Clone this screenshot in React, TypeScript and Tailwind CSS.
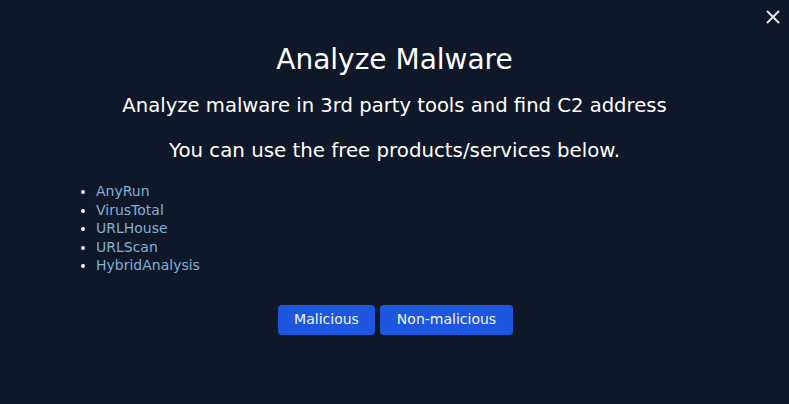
import { X } from "lucide-react"

const tools = ["AnyRun", "VirusTotal", "URLHouse", "URLScan", "HybridAnalysis"]

export default function App() {
  return (
    <div className="relative w-[789px] h-[404px] bg-[#0f1828] text-white font-['DejaVu_Sans',sans-serif]">
      <button className="absolute right-[5px] top-[6px] text-gray-200">
        <X size={22} strokeWidth={2.2} />
      </button>
      <div className="flex flex-col items-center pt-[42px]">
        <h1 className="text-[28px] leading-[36px] font-medium">Analyze Malware</h1>
        <p className="mt-[14px] text-[19.6px] leading-[28px]">Analyze malware in 3rd party tools and find C2 address</p>
        <p className="mt-[17px] text-[19.8px] leading-[28px]">You can use the free products/services below.</p>
      </div>
      <ul className="mt-[17px] ml-[96px] list-disc text-[14px] leading-[18.5px] text-[#7fb1d6] marker:text-gray-100">
        {tools.map((t) => (
          <li key={t}>{t}</li>
        ))}
      </ul>
      <div className="mt-[30px] flex justify-center gap-[5px] pl-[2px]">
        <button className="h-[30px] w-[97px] rounded-[4px] bg-[#1d57e0] text-[14px] text-gray-100">Malicious</button>
        <button className="h-[30px] w-[133px] rounded-[4px] bg-[#1d57e0] text-[14px] text-gray-100">Non-malicious</button>
      </div>
    </div>
  )
}
